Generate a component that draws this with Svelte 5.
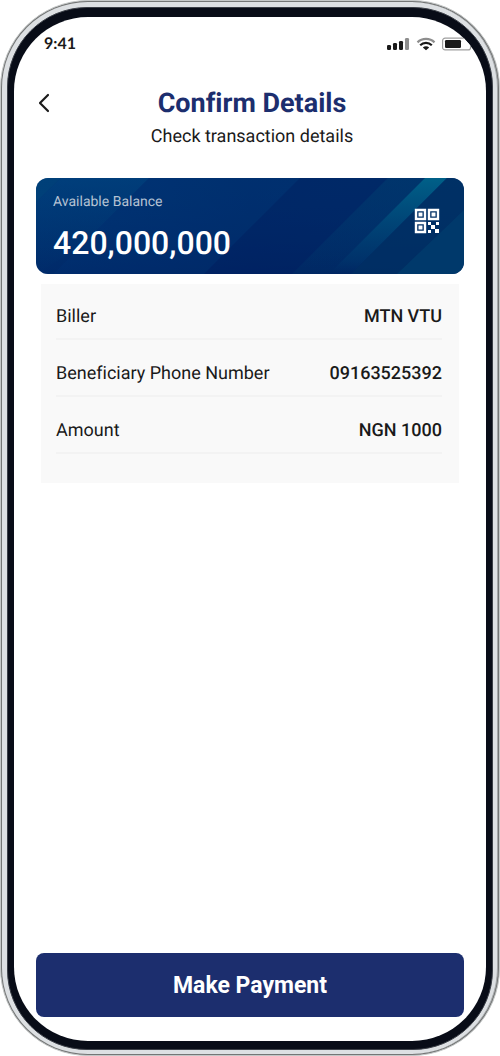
<script>
  const details = [
    { label: 'Biller', value: 'MTN VTU' },
    { label: 'Beneficiary Phone Number', value: '09163525392' },
    { label: 'Amount', value: 'NGN 1000' },
  ];
</script>

<div class="rim">
  <div class="metal">
    <div class="bezel">
      <div class="screen">
        <div class="status">
          <span class="time">9:41</span>
          <div class="indicators">
            <svg width="23" height="14" viewBox="0 0 23 14" aria-hidden="true">
              <g fill="#1a1a1a">
                <rect x="0" y="8" width="4" height="5" rx="1.200" />
                <rect x="6" y="6" width="4" height="7" rx="1.200" />
                <rect x="12" y="4" width="4" height="9" rx="1.200" />
              </g>
              <rect x="18" y="1" width="4" height="12" rx="1.200" fill="#8e8e8e" />
            </svg>
            <svg width="20" height="14" viewBox="0 0 20 14" fill="none" aria-hidden="true">
              <path d="M1.500 5.400C6.200.8 13.800.8 18.500 5.400" stroke="#8e8e8e" stroke-width="2.200" />
              <path d="M4.200 8.200C7.400 5 12.600 5 15.800 8.200" stroke="#1a1a1a" stroke-width="2.200" />
              <path d="M6.800 10.600C8.600 8.900 11.400 8.900 13.200 10.600L10 13.200Z" fill="#1a1a1a" />
            </svg>
            <svg width="32" height="14" viewBox="0 0 32 14" aria-hidden="true">
              <rect x=".6" y="1.100" width="28" height="11.800" rx="2.500" fill="#fff" stroke="#a0a0a0" stroke-width="1.200" />
              <rect x="3" y="3" width="16" height="8" rx="1.200" fill="#1a1a1a" />
              <path d="M30 5c1.500.5 1.500 3.500 0 4z" fill="#a0a0a0" />
            </svg>
          </div>
        </div>

        <header>
          <button class="back" aria-label="Back">
            <svg width="12" height="20" viewBox="0 0 12 20" fill="none" aria-hidden="true">
              <path d="M10 2 2 10 10 18" stroke="#1a1a1a" stroke-width="2.200" stroke-linecap="round" stroke-linejoin="round" />
            </svg>
          </button>
          <div class="heading">
            <h1>Confirm Details</h1>
            <p>Check transaction details</p>
          </div>
        </header>

        <main>
          <section class="balance">
            <svg class="rays" viewBox="0 0 428 96" preserveAspectRatio="none" aria-hidden="true">
              <defs>
                <linearGradient id="base" x1="0" y1="0" x2="1" y2="0">
                  <stop offset="0" stop-color="#003273" />
                  <stop offset=".5" stop-color="#002a68" />
                  <stop offset="1" stop-color="#002e66" />
                </linearGradient>
                <linearGradient id="shade" x1="0" y1="0" x2="0" y2="1">
                  <stop offset="0" stop-color="#00407c" stop-opacity=".2" />
                  <stop offset="1" stop-color="#001f5c" stop-opacity=".4" />
                </linearGradient>
                <linearGradient id="beam" x1="0" y1="0" x2="0" y2="1">
                  <stop offset="0" stop-color="#006088" />
                  <stop offset=".85" stop-color="#004878" stop-opacity=".3" />
                  <stop offset="1" stop-color="#004878" stop-opacity="0" />
                </linearGradient>
                <linearGradient id="edge" x1="0" y1="0" x2="0" y2="1">
                  <stop offset="0" stop-color="#00376d" stop-opacity=".6" />
                  <stop offset="1" stop-color="#00376d" stop-opacity=".1" />
                </linearGradient>
                <linearGradient id="glow" x1="0" y1="0" x2="0" y2="1">
                  <stop offset="0" stop-color="#004580" stop-opacity=".6" />
                  <stop offset="1" stop-color="#003d75" stop-opacity="0" />
                </linearGradient>
              </defs>
              <rect width="428" height="96" fill="url(#base)" />
              <rect width="428" height="96" fill="url(#shade)" />
              <path d="M0 0H25L0 24Z" fill="#004c7d" opacity=".5" />
              <path d="M25 0H113L45 68 0 96V24Z" fill="url(#glow)" />
              <path d="M113 0H264L168 96H17Z" fill="#003577" opacity=".25" />
              <path d="M264 0H352L256 96H168Z" fill="#001e60" opacity=".35" />
              <path d="M352 0H389L293 96H256Z" fill="url(#edge)" />
              <path d="M389 0H411L315 96H293Z" fill="url(#beam)" />
              <path d="M411 0H428V32L364 96H315Z" fill="#003164" opacity=".7" />
              <path d="M428 32V96H361Z" fill="#003b6b" opacity=".9" />
            </svg>
            <div class="funds">
              <span>Available Balance</span>
              <strong>420,000,000</strong>
            </div>
            <button class="qr" aria-label="Show QR code">
              <svg width="26" height="26" viewBox="0 0 26 26" aria-hidden="true">
                <g fill="none" stroke="#fff" stroke-width="2.400">
                  <path d="M2 2h9v9H2zM15 2h9v9h-9zM2 15h9v9H2z" />
                </g>
                <path fill="#fff" d="M4.500 4.500h4v4h-4zM17.500 4.500h4v4h-4zM4.500 17.500h4v4h-4zM14 14h3v3h-3zM17 17h4v4h-4zM22 14h3v3h-3zM14 22h3v3h-3zM21 21h4v4h-4z" />
              </svg>
            </button>
          </section>

          <dl>
            {#each details as item}
              <div class="row">
                <dt>{item.label}</dt>
                <dd>{item.value}</dd>
              </div>
            {/each}
          </dl>
        </main>

        <button class="pay">Make Payment</button>
      </div>
    </div>
  </div>
</div>

<style>
  :global(body) {
    background: #fff;
  }

  .rim,
  .metal,
  .bezel,
  .screen {
    box-sizing: border-box;
    display: flex;
    flex-direction: column;
  }

  .rim {
    min-height: 100vh;
    padding: 1px;
    border: 1px solid #c4c7c7;
    border-radius: 88px;
    background: #747676;
    font-family: Roboto, sans-serif;
    font-variant-ligatures: none;
    color: #1a1a1a;
    text-rendering: geometricPrecision;
  }

  .metal {
    flex: 1;
    padding: 5px 4px 4px 5px;
    border-radius: 86px;
    background: #dde0e3;
    border-right: 1px solid #a5a8aa;
  }

  .bezel {
    flex: 1;
    padding: 9px 6px 8px;
    border: 1px solid #3b3f47;
    border-radius: 80px;
    background: #080c17;
  }

  .screen {
    flex: 1;
    overflow: hidden;
    padding: 14px 22px 24px;
    border-radius: 74px;
    background: #fff;
  }

  .status {
    display: flex;
    justify-content: space-between;
    align-items: center;
    height: 26px;
    padding-left: 8px;
  }

  .time {
    font: 700 16px/26px Lato, sans-serif;
  }

  .indicators {
    display: flex;
    align-items: center;
    gap: 6px;
    margin-right: -10px;
  }

  header {
    display: grid;
    grid-template-columns: 20px 1fr 16px;
    margin-top: 28px;
  }

  button {
    padding: 0;
    border: 0;
    background: none;
    font-family: inherit;
    cursor: pointer;
  }

  .back {
    display: flex;
    align-items: center;
    height: 36px;
    padding-left: 2px;
  }

  .heading {
    text-align: center;
  }

  h1 {
    margin: 0;
    font-size: 27px;
    line-height: 36px;
    font-weight: 700;
    color: #1c2e6e;
  }

  p {
    margin: 0;
    font-size: 18px;
    line-height: 32px;
  }

  main {
    flex: 1;
    margin-top: 25px;
  }

  .balance {
    position: relative;
    display: flex;
    justify-content: space-between;
    overflow: hidden;
    padding: 14px 24px 12px 17px;
    border-radius: 12px;
    color: #fff;
  }

  .rays {
    position: absolute;
    inset: 0;
    width: 100%;
    height: 100%;
  }

  .funds {
    position: relative;
    display: flex;
    flex-direction: column;
    gap: 12px;
  }

  .funds span {
    font-size: 14px;
    line-height: 20px;
    color: #b5c2d3;
  }

  .funds strong {
    font-size: 32px;
    line-height: 38px;
    font-weight: 500;
  }

  .qr {
    position: relative;
    align-self: flex-start;
    margin-top: 16px;
  }

  .qr svg {
    display: block;
  }

  dl {
    margin: 10px 5px 0;
    padding: 8px 17px 29px 15px;
    background: #f9f9f9;
  }

  .row {
    display: flex;
    justify-content: space-between;
    padding: 13px 0 9px;
    border-bottom: 2px solid #f3f3f3;
    font-size: 18px;
    line-height: 24px;
  }

  .row + .row {
    padding-top: 22px;
  }

  dt,
  dd {
    margin: 0;
  }

  dd {
    font-weight: 500;
  }

  .pay {
    height: 64px;
    border-radius: 8px;
    background: #1c2e6e;
    color: #fff;
    font-size: 23px;
    font-weight: 700;
  }
</style>
